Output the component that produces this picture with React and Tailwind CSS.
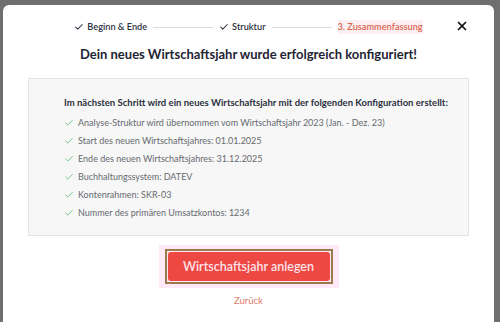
import { Check, X } from "lucide-react";

const items = [
  "Analyse-Struktur wird übernommen vom Wirtschaftsjahr 2023 (Jan. - Dez. 23)",
  "Start des neuen Wirtschaftsjahres: 01.01.2025",
  "Ende des neuen Wirtschaftsjahres: 31.12.2025",
  "Buchhaltungssystem: DATEV",
  "Kontenrahmen: SKR-03",
  "Nummer des primären Umsatzkontos: 1234",
];

function Step({ done, label }) {
  return (
    <div className="flex items-center gap-[3px] text-[9.2px] font-semibold text-[#2b3140]">
      {done && <Check size={10} strokeWidth={2.5} />}
      <span>{label}</span>
    </div>
  );
}

export default function App() {
  return (
    <div
      className="w-[500px] h-[322px] overflow-hidden bg-[#6f6f6f] pt-[5px] pl-[3px]"
      style={{ fontFamily: "Lato, 'Noto Sans', sans-serif" }}
    >
      <div className="relative w-[491px] h-[330px] bg-white rounded-t-[6px]">
        {/* Stepper */}
        <div className="flex items-center justify-center gap-[6px] pt-[15px] leading-[14px]">
          <Step done label="Beginn & Ende" />
          <div className="w-[60px] h-px bg-[#dcdcdc]" />
          <Step done label="Struktur" />
          <div className="w-[60px] h-px bg-[#dcdcdc]" />
          <span className="text-[9.2px] font-semibold text-[#d9644f] bg-[#fdf0f3]">
            3. Zusammenfassung
          </span>
        </div>
        <button className="absolute right-[25px] top-[14px] text-[#111]">
          <X size={14} strokeWidth={3} />
        </button>

        <h1 className="mt-[11px] text-center text-[13px] leading-[18px] font-bold text-[#1e2433]">
          Dein neues Wirtschaftsjahr wurde erfolgreich konfiguriert!
        </h1>

        {/* Info box */}
        <div className="mx-[25px] mt-[15px] border border-[#e3e3e3] bg-[#f7f7f7] pl-[35px] pt-[18px] pb-[15px]">
          <p className="text-[9.5px] leading-[12px] font-bold text-[#2b3140]">
            Im nächsten Schritt wird ein neues Wirtschaftsjahr mit der folgenden Konfiguration erstellt:
          </p>
          <ul className="mt-[7px] flex flex-col gap-[4px]">
            {items.map((t) => (
              <li key={t} className="flex items-center gap-[4px] h-[14px] text-[9px] text-[#666a70]">
                <Check size={10} strokeWidth={2} className="text-[#5bb87a]" />
                <span>{t}</span>
              </li>
            ))}
          </ul>
        </div>

        {/* Actions */}
        <div className="mt-[9px] flex flex-col items-center">
          <div className="bg-[#fde9f8] px-[6px] py-[4px]">
            <button className="border-[2px] border-[#9b7a4c] p-[1px]">
              <span className="block w-[162px] h-[29px] rounded-[3px] bg-[#ee4843] text-[12.5px] font-semibold text-[#fde3ea] leading-[29px]">
                Wirtschaftsjahr anlegen
              </span>
            </button>
          </div>
          <span className="mt-[6px] text-[9.5px] text-[#e07b6c]">Zurück</span>
        </div>
      </div>
    </div>
  );
}
